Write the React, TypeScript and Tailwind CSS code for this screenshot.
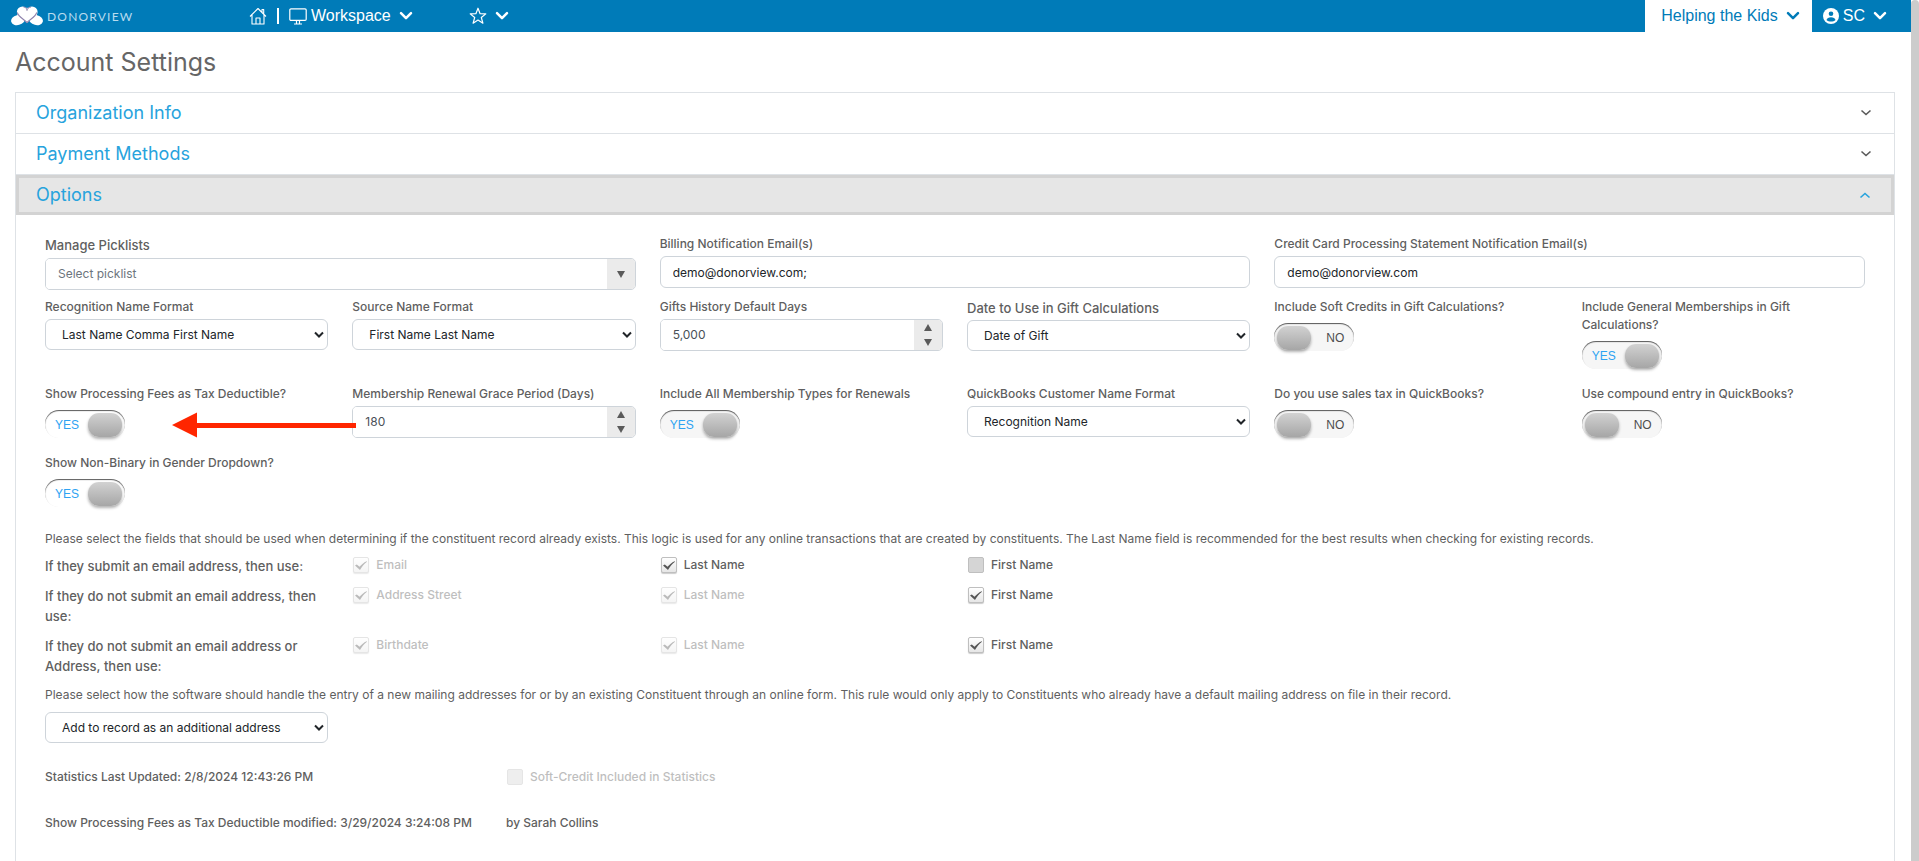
import React, { useId } from "react";

const INTER = "font-['Inter','Liberation_Sans',sans-serif]";

function Chevron({ className }: { className: string }) {
  return (
    <svg viewBox="0 0 14 10" className={className} fill="none" stroke="currentColor" strokeWidth="2.5" strokeLinecap="round" strokeLinejoin="round" aria-hidden="true">
      <path d="M2 2.2 7 7.2l5-5" />
    </svg>
  );
}

function Logo() {
  return (
    <a href="#home" aria-label="DonorView" className="flex items-center gap-1">
      <svg viewBox="0 0 32 20" className="h-5 w-8" aria-hidden="true">
        <g fill="#fff">
          <circle cx="11.5" cy="6" r="5.6" />
          <circle cx="21" cy="6" r="5.6" />
          <path d="M6.5 8.5 16 1.5l10 7L16 17z" />
          <ellipse cx="7" cy="14" rx="7" ry="5" transform="rotate(-14 7 14)" />
          <ellipse cx="25" cy="14" rx="7" ry="5" transform="rotate(14 25 14)" />
        </g>
        <path d="M6.3 6.5C7.5 11 12 12.500 16 16.500c4-4 8.500-5.500 9.700-10" fill="none" stroke="#8f83ad" strokeWidth="1.100" />
        <path d="M12.500 1C15 1 16 3 16 4.500 16 3 17.500 1 20 1" fill="none" stroke="#8f83ad" strokeWidth="1" />
      </svg>
      <span className="pt-0.5 font-['Lato',sans-serif] text-xs tracking-widest text-[#b9dcef]">DONORVIEW</span>
    </a>
  );
}

function Header() {
  return (
    <header className="flex h-8 items-stretch bg-[#007bb8] font-['Liberation_Sans',Arial,sans-serif] text-base text-white">
      <div className="flex w-[249px] items-center pl-[11px]">
        <Logo />
      </div>
      <nav className="flex flex-1 items-center">
        <a href="#home" aria-label="Home">
          <svg viewBox="0 0 18 18" className="h-[18px] w-[18px]" fill="none" stroke="currentColor" strokeWidth="1.100" strokeLinejoin="round" aria-hidden="true">
            <path d="M1 9.500 9 1.500l8 8M3 8v9h12V8M13 5.200V2.500h1.700v4.400M7 17v-6h4v6" />
          </svg>
        </a>
        <span className="mx-[10px] h-4 w-0.5 bg-white" />
        <button type="button" className="flex items-center">
          <svg viewBox="0 0 18 17" className="mr-1 h-[17px] w-[18px]" fill="none" stroke="currentColor" strokeWidth="1.200" aria-hidden="true">
            <rect x=".8" y=".8" width="16.400" height="11.600" rx="1.200" />
            <path d="M7.500 12.500v3M10.500 12.500v3M5 16h8" />
          </svg>
          <span className="font-medium">Workspace</span>
          <Chevron className="ml-2 h-[10px] w-[14px]" />
        </button>
        <button type="button" aria-label="Favorites" className="ml-14 flex items-center gap-2">
          <svg viewBox="0 0 18 18" className="h-[18px] w-[18px]" fill="none" stroke="currentColor" strokeWidth="1.200" strokeLinejoin="round" aria-hidden="true">
            <path d="m9 1.200 2.100 5.500 5.700.2-4.500 3.600 1.600 5.700L9 13l-4.900 3.200 1.600-5.700L1.200 6.900l5.700-.2z" />
          </svg>
          <Chevron className="h-[10px] w-[14px]" />
        </button>
      </nav>
      <button type="button" className="flex items-center gap-2 bg-white pr-3 pl-4 text-[#007bb8]">
        Helping the Kids
        <Chevron className="h-[10px] w-[14px]" />
      </button>
      <button type="button" className="flex items-center pr-6 pl-[11px]">
        <svg viewBox="0 0 16 16" className="mr-1 h-4 w-4" aria-hidden="true">
          <circle cx="8" cy="8" r="8" fill="#fff" />
          <circle cx="8" cy="5.800" r="2.300" fill="#007bb8" />
          <path d="M3.500 12c.6-2 2-2.800 4.500-2.800s3.900.8 4.500 2.800C11.400 13 9.800 13.600 8 13.600S4.600 13 3.500 12z" fill="#007bb8" />
        </svg>
        SC
        <Chevron className="ml-2 h-[10px] w-[14px]" />
      </button>
    </header>
  );
}

function Section({ title, open = false }: { title: string; open?: boolean }) {
  return (
    <h2>
      <button
        type="button"
        aria-expanded={open}
        className={
          open
            ? "flex h-10 w-full items-center justify-between border-[3px] border-[#d3d3d3] bg-[#e6e6e6] pr-[18px] pl-[17px] text-[#27a3dd]"
            : "flex h-[41px] w-full items-center justify-between border-b border-[#dee2e6] px-5 text-[#5a5a5a]"
        }
      >
        <span className="text-lg text-[#27a3dd]">{title}</span>
        <svg viewBox="0 0 12 8" className={open ? "mr-0.5 h-2 w-3 rotate-180" : "mr-0.5 h-2 w-3"} fill="none" stroke="currentColor" strokeWidth="1.600" aria-hidden="true">
          <path d="m1.500 1.500 4.500 4 4.500-4" />
        </svg>
      </button>
    </h2>
  );
}

function Label({ id, children, large = false }: { id: string; children: React.ReactNode; large?: boolean }) {
  return (
    <label htmlFor={id} className={large ? "block text-[13px]/5 font-medium" : "block text-xs/[18px] font-medium"}>
      {children}
    </label>
  );
}

function SelectField({ label, value, large = false }: { label: string; value: string; large?: boolean }) {
  const id = useId();
  return (
    <div>
      <Label id={id} large={large}>{label}</Label>
      <SelectBox id={id} value={value} className={large ? "mt-0.5" : "mt-[3px]"} />
    </div>
  );
}

function SelectBox({ id, value, className = "", label }: { id?: string; value: string; className?: string; label?: string }) {
  return (
    <div className={`grid items-center ${className}`}>
      <select id={id} aria-label={label} className="col-start-1 row-start-1 h-[31px] w-full appearance-none rounded-md border border-[#ced4da] bg-white px-4 text-xs text-[#212529]">
        <option>{value}</option>
      </select>
      <svg viewBox="0 0 10 8" className="pointer-events-none col-start-1 row-start-1 mr-1 h-2 w-[10px] justify-self-end text-[#212529]" fill="none" stroke="currentColor" strokeWidth="2" aria-hidden="true">
        <path d="m1 1.500 4 4 4-4" />
      </svg>
    </div>
  );
}

function TextField({ label, value }: { label: string; value: string }) {
  const id = useId();
  return (
    <div className="col-span-2">
      <Label id={id}>{label}</Label>
      <input id={id} type="text" defaultValue={value} className="mt-[3px] block h-8 w-full rounded-md border border-[#ced4da] bg-white px-3 text-xs text-[#212529]" />
    </div>
  );
}

function Triangle({ up = false }: { up?: boolean }) {
  return (
    <svg viewBox="0 0 8 7" className={up ? "h-[7px] w-2 rotate-180" : "h-[7px] w-2"} aria-hidden="true">
      <path d="M0 0h8L4 7z" fill="#5a5a5a" />
    </svg>
  );
}

function NumberField({ label, value }: { label: string; value: string }) {
  const id = useId();
  return (
    <div>
      <Label id={id}>{label}</Label>
      <div className="mt-[3px] flex h-8 overflow-hidden rounded-[5px] border border-[#ced4da]">
        <input id={id} type="text" inputMode="numeric" defaultValue={value} className="min-w-0 flex-1 bg-white px-3 text-xs text-[#495057]" />
        <div className="flex w-7 flex-col bg-[#ebebeb]">
          <button type="button" aria-label="Increase value" className="flex flex-1 items-center justify-center"><Triangle up /></button>
          <button type="button" aria-label="Decrease value" className="flex flex-1 items-center justify-center"><Triangle /></button>
        </div>
      </div>
    </div>
  );
}

function PicklistField() {
  const id = useId();
  return (
    <div className="col-span-2">
      <Label id={id} large>Manage Picklists</Label>
      <div className="mt-[3px] flex h-8 overflow-hidden rounded-[5px] border border-[#ced4da]">
        <input id={id} type="text" placeholder="Select picklist" className="min-w-0 flex-1 bg-white px-3 text-xs placeholder:text-[#6c757d]" />
        <button type="button" aria-label="Open picklist" className="flex w-7 items-center justify-center bg-[#ebebeb]"><Triangle /></button>
      </div>
    </div>
  );
}

function ToggleField({ label, on = false, plain = false }: { label: string; on?: boolean; plain?: boolean }) {
  const id = useId();
  return (
    <div className="mb-2">
      <Label id={id}>{label}</Label>
      <button
        id={id}
        type="button"
        role="switch"
        aria-checked={on}
        className={`mt-[7px] flex h-7 w-20 items-center justify-between rounded-full pt-px font-['Liberation_Sans',Arial,sans-serif] text-xs shadow-[inset_0_1px_1px_rgba(0,0,0,0.65)] ${plain ? "bg-white" : "bg-[#f6f6f6]"} ${on ? "flex-row-reverse pr-[3px] pl-[10px]" : "pr-[10px] pl-[3px]"}`}
      >
        <span className="h-6 w-[34px] rounded-[11px] bg-linear-to-b from-[#d2d2d2] to-[#a6a6a6] shadow-[0_2px_3px_rgba(0,0,0,0.3)]" />
        <span className={on ? "text-[#2ea3f2]" : "text-[#4d4d4d]"}>{on ? "YES" : "NO"}</span>
      </button>
    </div>
  );
}

function Check({ label, checked = false, disabled = false }: { label: string; checked?: boolean; disabled?: boolean }) {
  return (
    <label className={`flex h-[18px] items-center gap-[7px] pl-px text-xs font-medium ${disabled ? "opacity-40" : ""}`}>
      <span className="grid">
        <input
          type="checkbox"
          defaultChecked={checked}
          disabled={disabled}
          className="col-start-1 row-start-1 h-4 w-4 appearance-none rounded-xs border border-[#bfbfbf] bg-[#d5d5d5] checked:bg-linear-to-b checked:from-white checked:to-[#e6e6e6] checked:shadow-[0_1px_1px_rgba(0,0,0,0.2)]"
        />
        {checked && (
          <svg viewBox="0 0 16 16" className="pointer-events-none col-start-1 row-start-1 h-4 w-4" aria-hidden="true">
            <path d="M2 8.600 3.800 7.600l2.700 2.200C8.500 7.500 10.800 5.500 13.600 4.200l.4.600C11 7.200 8.800 9.800 7 13z" fill="#555" />
          </svg>
        )}
      </span>
      {label}
    </label>
  );
}

export default function App() {
  return (
    <div className={`flex min-h-screen bg-white text-[#5f5f5f] ${INTER}`}>
      <div className="flex min-w-0 flex-1 flex-col">
        <Header />
        <main className="flex flex-1 flex-col pr-4 pl-[15px]">
          <h1 className="flex h-[60px] items-center pt-0.5 text-[25px] text-[#666]">Account Settings</h1>
          <div className="flex-1 border border-b-0 border-[#dee2e6]">
            <Section title="Organization Info" />
            <Section title="Payment Methods" />
            <Section title="Options" open />
            <div className="px-[29px] pt-5">
              <div className="grid grid-cols-6 gap-x-6 gap-y-2">
                <PicklistField />
                <TextField label="Billing Notification Email(s)" value="demo@donorview.com;" />
                <TextField label="Credit Card Processing Statement Notification Email(s)" value="demo@donorview.com" />
                <SelectField label="Recognition Name Format" value="Last Name Comma First Name" />
                <SelectField label="Source Name Format" value="First Name Last Name" />
                <NumberField label="Gifts History Default Days" value="5,000" />
                <SelectField label="Date to Use in Gift Calculations" value="Date of Gift" large />
                <ToggleField label="Include Soft Credits in Gift Calculations?" />
                <ToggleField label="Include General Memberships in Gift Calculations?" on />
                <div className="relative">
                  <ToggleField label="Show Processing Fees as Tax Deductible?" on plain />
                  <svg viewBox="0 0 184 26" className="pointer-events-none absolute top-[27px] left-[127px] z-10 h-[26px] w-[184px]" aria-hidden="true">
                    <path d="M0 13 25 .5v10.500h159v5H25v9.500z" fill="#ff2600" />
                  </svg>
                </div>
                <NumberField label="Membership Renewal Grace Period (Days)" value="180" />
                <ToggleField label="Include All Membership Types for Renewals" on />
                <SelectField label="QuickBooks Customer Name Format" value="Recognition Name" />
                <ToggleField label="Do you use sales tax in QuickBooks?" />
                <ToggleField label="Use compound entry in QuickBooks?" />
                <ToggleField label="Show Non-Binary in Gender Dropdown?" on plain />
              </div>
              <p className="mt-[15px] mb-2 text-xs/[18px]">
                Please select the fields that should be used when determining if the constituent record already exists. This logic is used for any online transactions that are created by constituents. The Last Name field is recommended for the best results when checking for existing records.
              </p>
              <div className="grid grid-cols-6 gap-x-6 gap-y-[10px]">
                <p className="text-[13px]/5 font-medium">If they submit an email address, then use:</p>
                <Check label="Email" checked disabled />
                <Check label="Last Name" checked />
                <Check label="First Name" />
                <p className="col-start-1 text-[13px]/5 font-medium">If they do not submit an email address, then use:</p>
                <Check label="Address Street" checked disabled />
                <Check label="Last Name" checked disabled />
                <Check label="First Name" checked />
                <p className="col-start-1 text-[13px]/5 font-medium">If they do not submit an email address or Address, then use:</p>
                <Check label="Birthdate" checked disabled />
                <Check label="Last Name" checked disabled />
                <Check label="First Name" checked />
              </div>
              <p className="mt-[10px] mb-2 text-xs/[18px]">
                Please select how the software should handle the entry of a new mailing addresses for or by an existing Constituent through an online form. This rule would only apply to Constituents who already have a default mailing address on file in their record.
              </p>
              <div className="grid grid-cols-6 gap-x-6">
                <SelectBox label="Mailing address handling" value="Add to record as an additional address" />
              </div>
              <div className="mt-[25px] grid grid-cols-4 gap-x-6 gap-y-7 text-xs/[18px] font-medium">
                <p>Statistics Last Updated: 2/8/2024 12:43:26 PM</p>
                <Check label="Soft-Credit Included in Statistics" disabled />
                <p className="col-start-1">Show Processing Fees as Tax Deductible modified: 3/29/2024 3:24:08 PM</p>
                <p>by Sarah Collins</p>
              </div>
            </div>
          </div>
        </main>
      </div>
      <div className="w-2 rounded-t-sm bg-[#cccccc]" />
    </div>
  );
}
